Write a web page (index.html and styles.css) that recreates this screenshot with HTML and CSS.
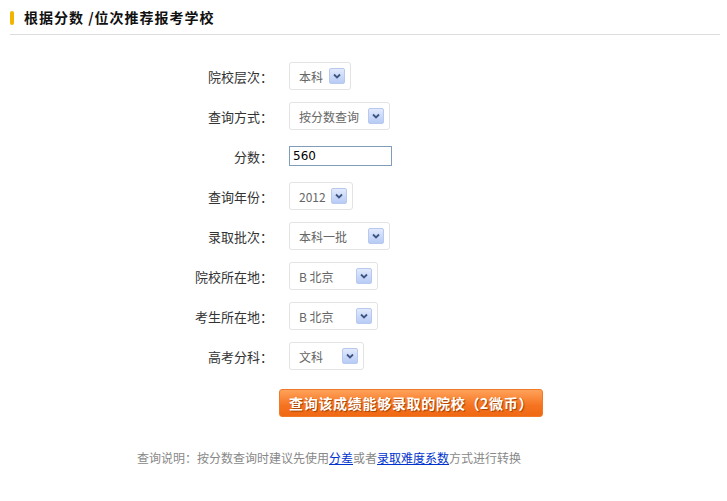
FILE: index.html
```html
<!DOCTYPE html>
<html lang="zh-CN">
<head>
<meta charset="utf-8">
<title>根据分数/位次推荐报考学校</title>
<link rel="stylesheet" href="styles.css">
</head>
<body>
<div class="page">
  <div class="head">
    <span class="head-mark"></span>
    <h2 class="head-title">根据分数 /位次推荐报考学校</h2>
  </div>
  <div class="form">
    <div class="row">
      <label class="lbl">院校层次：</label>
      <div class="sel w62"><span class="sel-text">本科</span><span class="arrow"><svg width="8" height="6" viewBox="0 0 8 6"><path d="M1 1.5 L4 4.5 L7 1.5" fill="none" stroke="#3d5583" stroke-width="1.8"/></svg></span></div>
    </div>
    <div class="row">
      <label class="lbl">查询方式：</label>
      <div class="sel w101"><span class="sel-text">按分数查询</span><span class="arrow"><svg width="8" height="6" viewBox="0 0 8 6"><path d="M1 1.5 L4 4.5 L7 1.5" fill="none" stroke="#3d5583" stroke-width="1.8"/></svg></span></div>
    </div>
    <div class="row">
      <label class="lbl">分数：</label>
      <input class="txt" type="text" value="560">
    </div>
    <div class="row">
      <label class="lbl">查询年份：</label>
      <div class="sel w64"><span class="sel-text">2012</span><span class="arrow"><svg width="8" height="6" viewBox="0 0 8 6"><path d="M1 1.5 L4 4.5 L7 1.5" fill="none" stroke="#3d5583" stroke-width="1.8"/></svg></span></div>
    </div>
    <div class="row">
      <label class="lbl">录取批次：</label>
      <div class="sel w101"><span class="sel-text">本科一批</span><span class="arrow"><svg width="8" height="6" viewBox="0 0 8 6"><path d="M1 1.5 L4 4.5 L7 1.5" fill="none" stroke="#3d5583" stroke-width="1.8"/></svg></span></div>
    </div>
    <div class="row">
      <label class="lbl">院校所在地：</label>
      <div class="sel w89"><span class="sel-text">B&nbsp;北京</span><span class="arrow"><svg width="8" height="6" viewBox="0 0 8 6"><path d="M1 1.5 L4 4.5 L7 1.5" fill="none" stroke="#3d5583" stroke-width="1.8"/></svg></span></div>
    </div>
    <div class="row">
      <label class="lbl">考生所在地：</label>
      <div class="sel w89"><span class="sel-text">B&nbsp;北京</span><span class="arrow"><svg width="8" height="6" viewBox="0 0 8 6"><path d="M1 1.5 L4 4.5 L7 1.5" fill="none" stroke="#3d5583" stroke-width="1.8"/></svg></span></div>
    </div>
    <div class="row">
      <label class="lbl">高考分科：</label>
      <div class="sel w75"><span class="sel-text">文科</span><span class="arrow"><svg width="8" height="6" viewBox="0 0 8 6"><path d="M1 1.5 L4 4.5 L7 1.5" fill="none" stroke="#3d5583" stroke-width="1.8"/></svg></span></div>
    </div>
    <div class="btn-row">
      <button class="btn" type="button">查询该成绩能够录取的院校（2微币）</button>
    </div>
  </div>
  <p class="note">查询说明：按分数查询时建议先使用<a href="#">分差</a>或者<a href="#">录取难度系数</a>方式进行转换</p>
</div>
</body>
</html>
```

FILE: styles.css
```css
html, body {
  margin: 0;
  padding: 0;
  background: #fff;
}
body {
  font-family: "Noto Sans CJK SC", "Liberation Sans", sans-serif;
  font-size: 13px;
  color: #333;
}
.page {
  width: 727px;
}
.head {
  display: flex;
  align-items: center;
  height: 35px;
  margin: 0 7px 0 10px;
  border-bottom: 1px solid #dddddd;
  box-sizing: border-box;
}
.head-mark {
  width: 4px;
  height: 14px;
  background: #f3b400;
  border-radius: 2px;
  margin-right: 10px;
  margin-top: 1px;
}
.head-title {
  margin: 0;
  font-size: 14px;
  font-weight: bold;
  color: #111;
  line-height: 20px;
  letter-spacing: 1px;
}
.form {
  padding: 21px 0 0 153px;
}
.row {
  display: flex;
  align-items: center;
  height: 40px;
}
.lbl {
  width: 120px;
  text-align: right;
  margin-right: 16px;
  font-size: 13px;
  color: #333;
}
.sel {
  display: flex;
  align-items: center;
  justify-content: space-between;
  height: 28px;
  box-sizing: border-box;
  border: 1px solid #e3e3e3;
  border-radius: 3px;
  padding: 0 5px 0 9px;
  background: #fff;
}
.w62 { width: 62px; }
.w64 { width: 64px; }
.w75 { width: 75px; }
.w89 { width: 89px; }
.w101 { width: 101px; }
.sel-text {
  font-size: 12px;
  color: #666;
  white-space: nowrap;
}
.arrow {
  display: flex;
  align-items: center;
  justify-content: center;
  width: 16px;
  height: 16px;
  box-sizing: border-box;
  border: 1px solid #b8c9ef;
  border-radius: 2px;
  background: linear-gradient(#e2eafc, #b7cbf5);
}
.txt {
  width: 103px;
  height: 20px;
  box-sizing: border-box;
  border: 1px solid #7f9db9;
  padding: 0 3px;
  margin: 0;
  font-family: "DejaVu Sans", "Liberation Sans", sans-serif;
  font-size: 12px;
  color: #000;
  outline: none;
}
.btn-row {
  padding: 13px 0 0 126px;
}
.btn {
  width: 264px;
  height: 28px;
  box-sizing: border-box;
  border: 1px solid #ee7a2a;
  border-radius: 3px;
  background: linear-gradient(#ffa25a, #f57320 60%, #f06813);
  color: #fff;
  font-family: "Noto Sans CJK SC", sans-serif;
  font-size: 14px;
  font-weight: bold;
  letter-spacing: 0.7px;
  text-align: left;
  padding: 0 0 0 9px;
  text-shadow: 1px 1px 1px #a14000;
  cursor: pointer;
}
.note {
  margin: 32px 0 0 137px;
  font-size: 12px;
  line-height: 18px;
  color: #888;
}
.note a {
  color: #0033cc;
  text-decoration: underline;
}
```
